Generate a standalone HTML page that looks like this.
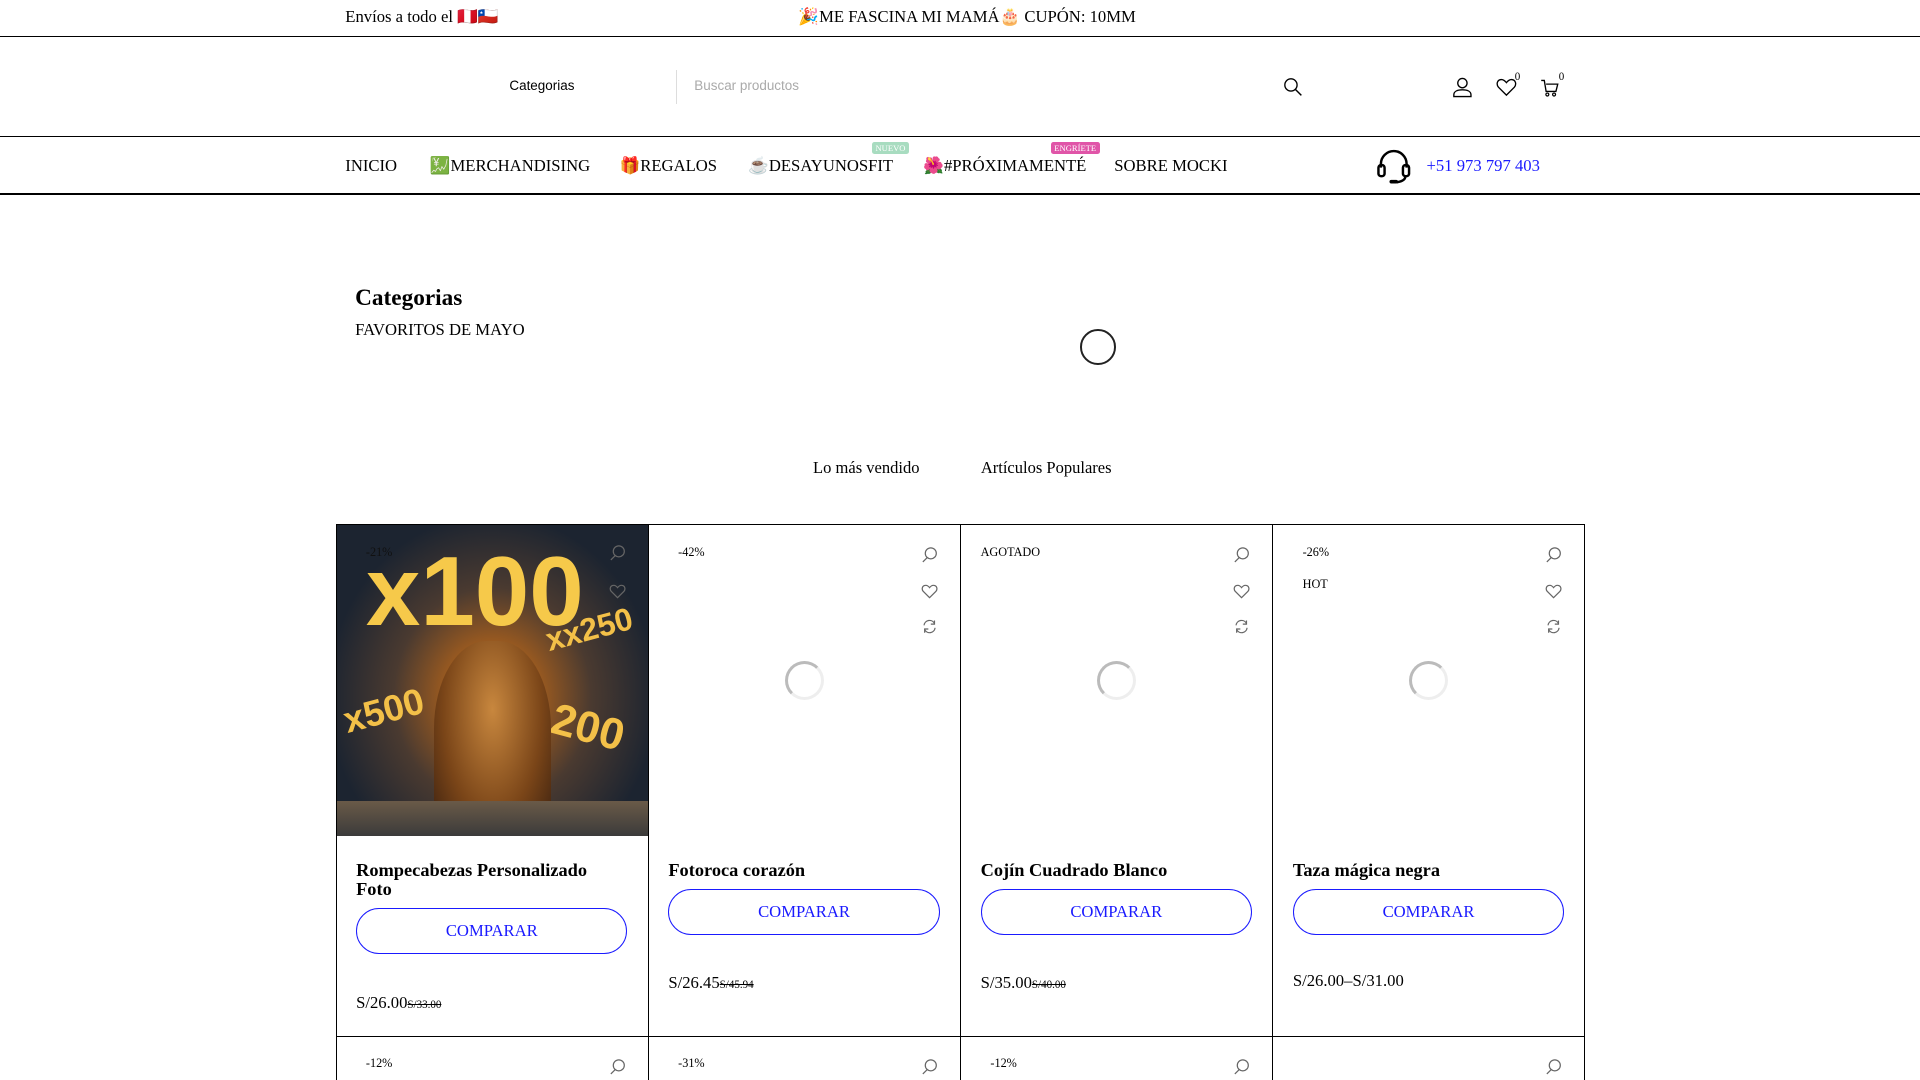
<!DOCTYPE html>
<html><head><meta charset="utf-8"><style>
html,body{margin:0;padding:0;background:#fff;overflow:hidden;width:1920px;height:1080px}
#w{position:relative;width:1568px;height:882px;zoom:1.2244898;font-family:"Liberation Serif",serif;color:#000;overflow:hidden}
.a{position:absolute;white-space:nowrap}
.ln{position:absolute;left:0;width:1568px;height:2px;background:#000}
.nav{font-size:13.6px;top:127px}
.badge{position:absolute;font-size:7px;color:#fff;padding:1px 3px;border-radius:2px;top:115px}
.card{position:absolute;top:428px;width:254px;height:418px;border-left:1px solid #000;border-top:1px solid #000}
.card .t{position:absolute;left:16px;top:274px;font-weight:bold;font-size:15px;line-height:16px;width:205px;white-space:normal}
.btn{position:absolute;left:16px;width:220px;height:36px;border:1px solid #1a1aff;border-radius:19px;color:#1a1aff;font-size:13.6px;text-align:center;line-height:36px}
.pr{position:absolute;left:16px;font-size:13.6px}
.pr s{font-size:9px}
.lab{position:absolute;left:24px;top:16px;font-size:10px}
.spin{position:absolute;left:111px;top:111px;width:32px;height:32px;border-radius:50%;border:3px solid #eee;border-top-color:#bbb;border-left-color:#bbb;box-sizing:border-box}
</style></head><body><div id="w">
<div class="a" style="left:282px;top:6px;font-size:13.6px">Envíos a todo el 🇵🇪🇨🇱</div>
<div class="a" style="left:652px;top:6px;font-size:13.6px">🎉ME FASCINA MI MAMÁ🎂 CUPÓN: 10MM</div>
<div class="ln" style="top:29px;height:1px"></div>
<div class="a" style="left:416px;top:64px;font-size:11px;font-family:'Liberation Sans',sans-serif">Categorias</div>
<div class="a" style="left:552px;top:57px;width:1px;height:28px;background:#ddd"></div>
<div class="a" style="left:567px;top:64px;font-size:11px;color:#aaa;font-family:'Liberation Sans',sans-serif">Buscar productos</div>
<svg class="a" style="left:1048px;top:63px" width="16" height="16" viewBox="0 0 16 16"><circle cx="6.5" cy="6.5" r="5" fill="none" stroke="#000" stroke-width="1.1"/><path d="M10 10l5 5" stroke="#000" stroke-width="1.2"/></svg>
<svg class="a" style="left:1186px;top:63px" width="17" height="17" viewBox="0 0 17 17"><circle cx="8.5" cy="5" r="3.8" fill="none" stroke="#000" stroke-width="1.1"/><path d="M1.5 16v-1.5c0-2.5 2.5-4 7-4s7 1.5 7 4V16z" fill="none" stroke="#000" stroke-width="1.1"/></svg>
<svg class="a" style="left:1222px;top:64px" width="17" height="15" viewBox="0 0 17 15"><path d="M8.5 14L2 7.5C0 5 1 1.5 4.2 1.3 6 1.2 7.5 2.5 8.5 3.8 9.5 2.5 11 1.2 12.8 1.3 16 1.5 17 5 15 7.5z" fill="none" stroke="#000" stroke-width="1.1"/></svg>
<div class="a" style="left:1237px;top:58px;font-size:9px">0</div>
<svg class="a" style="left:1258px;top:64px" width="16" height="16" viewBox="0 0 16 16"><path d="M1 2h2.5l1.5 9h8l1.5-6H5" fill="none" stroke="#000" stroke-width="1.1"/><circle cx="6" cy="13.5" r="1.2" fill="none" stroke="#000"/><circle cx="11.5" cy="13.5" r="1.2" fill="none" stroke="#000"/></svg>
<div class="a" style="left:1273px;top:58px;font-size:9px">0</div>
<div class="ln" style="top:111px;height:1px"></div>
<div class="a nav" style="left:282px">INICIO</div>
<div class="a nav" style="left:351px">💹MERCHANDISING</div>
<div class="a nav" style="left:506px">🎁REGALOS</div>
<div class="a nav" style="left:611px">☕DESAYUNOSFIT</div>
<div class="badge" style="left:712px;top:116px;background:#a8dcc0">NUEVO</div>
<div class="a nav" style="left:754px">🌺#PRÓXIMAMENTÉ</div>
<div class="badge" style="left:858px;top:116px;background:#e055a8">ENGRÍETE</div>
<div class="a nav" style="left:910px">SOBRE MOCKI</div>
<svg class="a" style="left:1124px;top:121px" width="30" height="30" viewBox="0 0 30 30"><path d="M4 16v-3a10.5 10.5 0 0121 0v3" fill="none" stroke="#000" stroke-width="2"/><rect x="2" y="14" width="5" height="9" rx="2" fill="none" stroke="#000" stroke-width="2"/><rect x="22" y="14" width="5" height="9" rx="2" fill="none" stroke="#000" stroke-width="2"/><path d="M24 23q0 4-7 5" fill="none" stroke="#000" stroke-width="2"/><rect x="11" y="26" width="7" height="3" rx="1.5" fill="#000"/></svg>
<div class="a" style="left:1165px;top:127px;font-size:13.6px;color:#1a1aff">+51 973 797 403</div>
<div class="ln" style="top:158px;height:1px"></div>
<div class="a" style="left:290px;top:233px;font-size:19px;font-weight:bold">Categorias</div>
<div class="a" style="left:290px;top:261px;font-size:13.6px">FAVORITOS DE MAYO</div>
<div class="a" style="left:882px;top:269px;width:26px;height:26px;border:2px solid #222;border-radius:50%"></div>
<div class="a" style="left:664px;top:374px;font-size:13.5px">Lo más vendido</div>
<div class="a" style="left:801px;top:374px;font-size:13.5px">Artículos Populares</div>

<div class="card" style="left:274px">
<div class="a" style="left:0;top:0;width:254px;height:254px;background:radial-gradient(ellipse at 50% 55%,#d08a30 0%,#9a5a20 22%,#4a3a30 45%,#1c2430 75%);overflow:hidden">
<div class="a" style="left:24px;top:8px;font:bold 80px 'Liberation Sans',sans-serif;color:#f6c94a">x100</div>
<div class="a" style="left:5px;top:135px;font:bold 30px 'Liberation Sans',sans-serif;color:#f3c048;transform:rotate(-15deg)">x500</div>
<div class="a" style="left:170px;top:70px;font:bold 26px 'Liberation Sans',sans-serif;color:#f3c048;transform:rotate(-15deg)">xx250</div>
<div class="a" style="left:175px;top:145px;font:bold 36px 'Liberation Sans',sans-serif;color:#f3c048;transform:rotate(15deg)">200</div>
<div class="a" style="left:80px;top:95px;width:95px;height:159px;border-radius:45% 45% 10% 10%;background:radial-gradient(ellipse at 50% 35%,#c8873e,#7a4518 60%,#3a2010)"></div>
<div class="a" style="left:0;top:225px;width:254px;height:30px;background:linear-gradient(#6a5a48,#3a3a3a)"></div>
</div>
<div class="lab" style="color:#111">-21%</div>
<div class="t">Rompecabezas Personalizado Foto</div>
<div class="btn" style="top:313px">COMPARAR</div>
<div class="pr" style="top:382px">S/26.00<s>S/33.00</s></div>
</div>

<div class="card" style="left:529px">
<div class="lab">-42%</div>
<div class="spin"></div>
<div class="t">Fotoroca corazón</div>
<div class="btn" style="top:297px">COMPARAR</div>
<div class="pr" style="top:366px">S/26.45<s>S/45.94</s></div>
</div>
<div class="card" style="left:784px">
<div class="lab" style="left:16px">AGOTADO</div>
<div class="spin"></div>
<div class="t">Cojín Cuadrado Blanco</div>
<div class="btn" style="top:297px">COMPARAR</div>
<div class="pr" style="top:366px">S/35.00<s>S/40.00</s></div>
</div>
<div class="card" style="left:1039px;border-right:1px solid #000">
<div class="lab">-26%</div>
<div class="lab" style="top:42px">HOT</div>
<div class="spin"></div>
<div class="t">Taza mágica negra</div>
<div class="btn" style="top:297px">COMPARAR</div>
<div class="pr" style="top:364px">S/26.00–S/31.00</div>
</div>

<div class="card" style="left:274px;top:846px;height:36px"><div class="lab">-12%</div></div>
<div class="card" style="left:529px;top:846px;height:36px"><div class="lab">-31%</div></div>
<div class="card" style="left:784px;top:846px;height:36px"><div class="lab">-12%</div></div>
<div class="card" style="left:1039px;top:846px;height:36px;border-right:1px solid #000"></div>

<svg width="0" height="0" style="position:absolute"><defs>
<g id="sr"><circle cx="8" cy="6" r="4.5" fill="none" stroke="#666" stroke-width="1"/><path d="M5 9.5L1.5 13" stroke="#666" stroke-width="1"/></g>
<g id="ht"><path d="M7 12L1.8 6.8C0.3 5 1 2 3.6 1.9 5 1.8 6.2 2.8 7 3.8 7.8 2.8 9 1.8 10.4 1.9 13 2 13.7 5 12.2 6.8z" fill="none" stroke="#666" stroke-width="1"/></g>
<g id="rf"><path d="M2.5 6a4.5 4.5 0 018.5-1.5M11.5 8a4.5 4.5 0 01-8.5 1.5" fill="none" stroke="#666" stroke-width="1"/><path d="M11 2v3H8M3 12V9h3" fill="none" stroke="#666" stroke-width="1"/></g>
</defs></svg>
<svg class="a" style="left:497px;top:444px" width="14" height="14"><use href="#sr"/></svg>
<svg class="a" style="left:497px;top:476px" width="14" height="14"><use href="#ht"/></svg>
<svg class="a" style="left:752px;top:446px" width="14" height="14"><use href="#sr"/></svg>
<svg class="a" style="left:752px;top:476px" width="14" height="14"><use href="#ht"/></svg>
<svg class="a" style="left:752px;top:505px" width="14" height="14"><use href="#rf"/></svg>
<svg class="a" style="left:1007px;top:446px" width="14" height="14"><use href="#sr"/></svg>
<svg class="a" style="left:1007px;top:476px" width="14" height="14"><use href="#ht"/></svg>
<svg class="a" style="left:1007px;top:505px" width="14" height="14"><use href="#rf"/></svg>
<svg class="a" style="left:1262px;top:446px" width="14" height="14"><use href="#sr"/></svg>
<svg class="a" style="left:1262px;top:476px" width="14" height="14"><use href="#ht"/></svg>
<svg class="a" style="left:1262px;top:505px" width="14" height="14"><use href="#rf"/></svg>
<svg class="a" style="left:497px;top:864px" width="14" height="14"><use href="#sr"/></svg>
<svg class="a" style="left:752px;top:864px" width="14" height="14"><use href="#sr"/></svg>
<svg class="a" style="left:1007px;top:864px" width="14" height="14"><use href="#sr"/></svg>
<svg class="a" style="left:1262px;top:864px" width="14" height="14"><use href="#sr"/></svg>
</div></body></html>
